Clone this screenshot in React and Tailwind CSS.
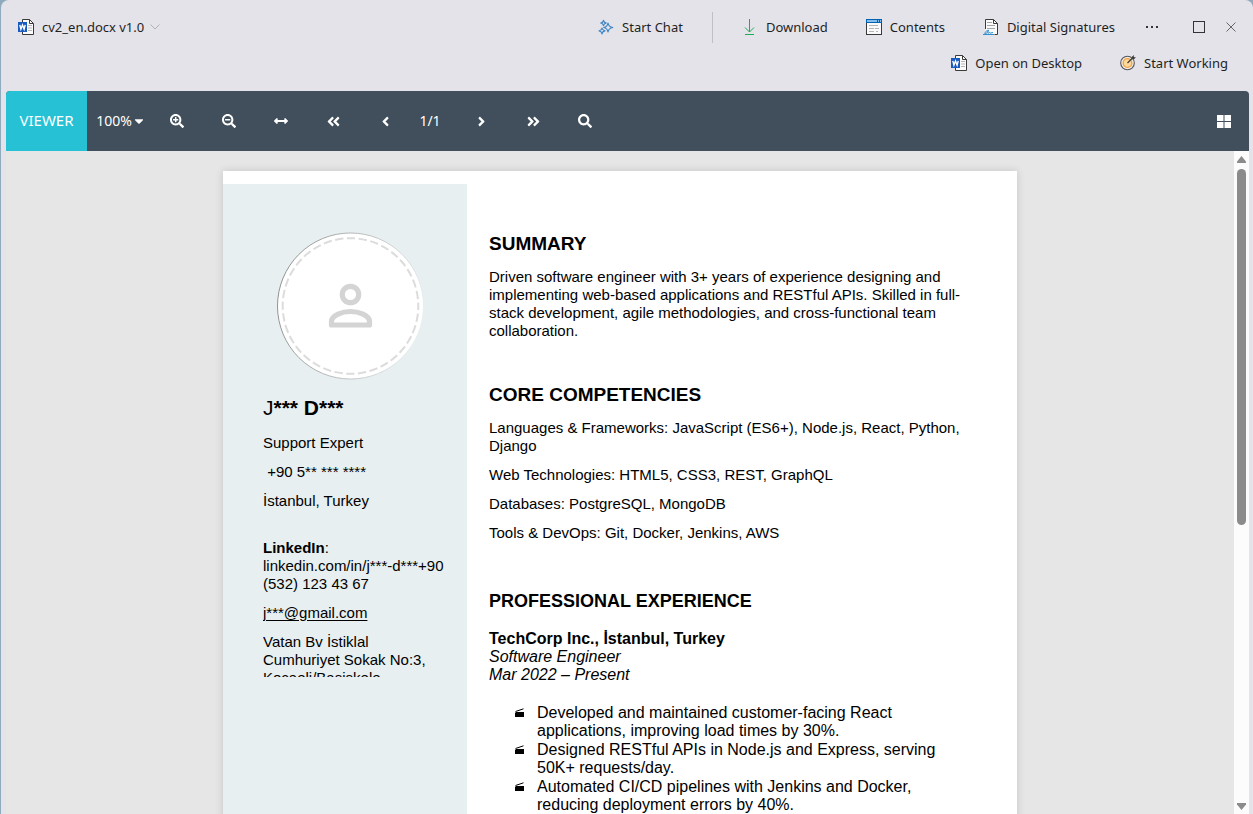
import React from "react";
import {
  FaSearchPlus,
  FaSearchMinus,
  FaArrowsAltH,
  FaAngleDoubleLeft,
  FaAngleLeft,
  FaAngleRight,
  FaAngleDoubleRight,
  FaSearch,
  FaCaretDown,
} from "react-icons/fa";

function WordIcon() {
  return (
    <svg width="16" height="16" viewBox="0 0 16 16" aria-hidden="true">
      <path d="M4.500 .5h7l4 4v11h-11z" fill="#fafafa" stroke="#3a3a38" />
      <path d="M11.500 .5v4h4" fill="none" stroke="#3a3a38" />
      <path d="M10 6.500h4M10 9h4M10 11.500h4" stroke="#b5b5b8" />
      <rect x="0" y="3" width="9" height="10" fill="#185abd" />
      <path d="M1.800 5.800l1.100 4.400L4.500 6l1.600 4.200L7.200 5.800" fill="none" stroke="#fff" strokeWidth="1.400" />
    </svg>
  );
}

function SparkleIcon() {
  return (
    <svg width="16" height="16" viewBox="0 0 16 16" fill="none" stroke="#3f87c5" strokeWidth="1.200" strokeLinejoin="round" aria-hidden="true">
      <path d="M10 4C10.500 6.700 12 8.100 14.800 8.500C12 9 10.500 10.200 10 13C9.500 10.200 8.200 9 5.800 8.500C8.200 8.100 9.500 6.700 10 4z" />
      <path d="M5.500 1.300C5.800 3 6.500 3.700 8.300 4C6.500 4.300 5.800 5 5.500 6.700C5.200 5 4.500 4.300 2.700 4C4.500 3.700 5.200 3 5.500 1.300z" />
      <path d="M4 9C4.300 10.700 5.200 11.500 7 11.800C5.200 12.100 4.300 13 4 14.800C3.700 13 2.800 12.100 1.100 11.800C2.800 11.500 3.700 10.700 4 9z" />
    </svg>
  );
}

function DownloadIcon() {
  return (
    <svg width="16" height="16" viewBox="0 0 16 16" fill="none" stroke="#1dab57" aria-hidden="true">
      <path d="M7.500 0v13M3 8.500l4.500 4.500L12 8.500M3 15.500h9" />
    </svg>
  );
}

function ContentsIcon() {
  return (
    <svg width="16" height="16" viewBox="0 0 16 16" aria-hidden="true">
      <rect x=".5" y=".5" width="15" height="15" fill="#fafafa" stroke="#3a3a38" />
      <rect x="0" y="0" width="16" height="4" fill="#0063b1" />
      <rect x="1" y="1" width="10" height="2" fill="#83beec" />
      <path d="M12.500 1v2M14.500 1v2" stroke="#83beec" />
      <path d="M3 6.500h9M3 9.500h5M9 9.500h4M3 12.500h5M10 12.500h2" stroke="#b5b5b8" />
    </svg>
  );
}

function SignatureIcon() {
  return (
    <svg width="16" height="16" viewBox="0 0 16 16" fill="none" aria-hidden="true">
      <path d="M2.500 11V.5h8l4 4v11h-3L2.500 12z" fill="#fafafa" />
      <path d="M2.500 10V.5h8l4 4v11h-3" stroke="#3a3a38" />
      <path d="M10.500 .5v4h4" stroke="#3a3a38" />
      <path d="M4 3.500h5M4 6.500h8M4 9.500h8" stroke="#a5a5a8" />
      <path d="M6 11.500C3.500 10.500 1.500 14 2 15C3.500 15.500 5 11.500 5.500 11.500C4.500 14 5 15 6.500 13.500L7.500 14L10 13.500M0 15.500h11" stroke="#2f8fd0" />
    </svg>
  );
}

function TargetIcon() {
  return (
    <svg width="16" height="16" viewBox="0 0 16 16" fill="none" aria-hidden="true">
      <circle cx="7.500" cy="8" r="6.800" stroke="#55555a" strokeWidth="1.100" fill="#f0ebe4" />
      <circle cx="7.500" cy="8" r="4.300" fill="#ffd99a" stroke="#f0a040" strokeWidth="1.300" />
      <path d="M7.500 8L13 2.500" stroke="#3a3a38" strokeWidth="1.200" />
      <path d="M12 4V1.800L13.800 0v2.200H16L14.200 4z" fill="#3a3a38" />
    </svg>
  );
}

function Action({ icon, children }) {
  return (
    <button type="button" className="flex h-9 items-center gap-2 whitespace-nowrap">
      {icon}
      <span>{children}</span>
    </button>
  );
}

function Header() {
  return (
    <header className="pt-[9px] pb-[10px] font-['Noto_Sans','Open_Sans',sans-serif] text-[13px] leading-5 text-[#1f1f1f]">
      <div className="flex h-9 items-center justify-between pr-[17px] pl-[17px]">
        <button type="button" className="flex items-center gap-2 whitespace-nowrap">
          <WordIcon />
          <span>cv2_en.docx v1.0</span>
          <svg width="10" height="6" viewBox="0 0 10 6" fill="none" stroke="#b0b0b5" className="-ml-0.5" aria-hidden="true">
            <path d="M.5 .5L5 5L9.500 .5" />
          </svg>
        </button>
        <div className="flex items-center">
          <Action icon={<SparkleIcon />}>Start Chat</Action>
          <div className="mx-[29px] h-[31px] w-px bg-[#bfbfc4]" />
          <div className="flex items-center gap-[38px]">
            <Action icon={<DownloadIcon />}>Download</Action>
            <Action icon={<ContentsIcon />}>Contents</Action>
            <Action icon={<SignatureIcon />}>Digital Signatures</Action>
          </div>
          <button type="button" aria-label="More" className="ml-[31px]">
            <svg width="14" height="4" viewBox="0 0 14 4" fill="#333" aria-hidden="true">
              <rect x="0" y="1" width="2" height="2" />
              <rect x="5" y="1" width="2" height="2" />
              <rect x="10" y="1" width="2" height="2" />
            </svg>
          </button>
          <button type="button" aria-label="Maximize" className="ml-[33px]">
            <svg width="12" height="12" viewBox="0 0 12 12" fill="none" stroke="#333" aria-hidden="true">
              <rect x=".5" y=".5" width="11" height="11" />
            </svg>
          </button>
          <button type="button" aria-label="Close" className="ml-[21px]">
            <svg width="10" height="10" viewBox="0 0 10 10" fill="none" stroke="#666" aria-hidden="true">
              <path d="M.5 .5l9 9M9.500 .5l-9 9" />
            </svg>
          </button>
        </div>
      </div>
      <div className="flex h-9 items-center justify-end gap-[38px] pr-[25px]">
        <Action icon={<WordIcon />}>Open on Desktop</Action>
        <Action icon={<TargetIcon />}>Start Working</Action>
      </div>
    </header>
  );
}

function ToolButton({ label, children }) {
  return (
    <button type="button" aria-label={label} className="flex h-full w-[52px] items-center justify-center">
      {children}
    </button>
  );
}

function Toolbar() {
  return (
    <div className="flex h-[60px] shrink-0 items-center overflow-hidden rounded-t-[4px] bg-[#404f5b] font-['Noto_Sans','Open_Sans',sans-serif] text-sm text-white">
      <button type="button" className="flex h-full w-[81px] items-center justify-center bg-[#26c1d5] text-[15px]">
        VIEWER
      </button>
      <button type="button" className="flex h-full w-16 items-center justify-center pl-1">
        100%
        <FaCaretDown size={14} />
      </button>
      <ToolButton label="Zoom in"><FaSearchPlus size={14} /></ToolButton>
      <ToolButton label="Zoom out"><FaSearchMinus size={14} /></ToolButton>
      <ToolButton label="Fit width"><FaArrowsAltH size={14} /></ToolButton>
      <ToolButton label="First page"><FaAngleDoubleLeft size={15} /></ToolButton>
      <ToolButton label="Previous page"><FaAngleLeft size={15} /></ToolButton>
      <span className="w-11 pr-1.5 text-center">1/1</span>
      <ToolButton label="Next page"><FaAngleRight size={15} /></ToolButton>
      <ToolButton label="Last page"><FaAngleDoubleRight size={15} /></ToolButton>
      <ToolButton label="Search"><FaSearch size={14} /></ToolButton>
      <button type="button" aria-label="Thumbnails" className="mr-[18px] ml-auto">
        <svg width="14" height="13" viewBox="0 0 14 13" fill="#fff" aria-hidden="true">
          <path d="M0 0h6.500v6H0zM7.500 0H14v6H7.500zM0 7h6.500v6H0zM7.500 7H14v6H7.500z" />
        </svg>
      </button>
    </div>
  );
}

function Avatar() {
  return (
    <svg width="148" height="148" viewBox="0 0 148 148" fill="none" className="ml-[14px]" role="img" aria-label="Profile">
      <defs>
        <linearGradient id="rim" x1="0" y1=".4" x2="1" y2=".6">
          <stop offset="0" stopColor="#777" />
          <stop offset=".6" stopColor="#bbb" />
          <stop offset="1" stopColor="#e7eff0" />
        </linearGradient>
      </defs>
      <circle cx="73.500" cy="74" r="73" fill="#fff" stroke="url(#rim)" strokeWidth=".8" />
      <circle cx="73.500" cy="74" r="67.800" stroke="#dcdcdc" strokeWidth="2" strokeDasharray="8.300 3.533" strokeDashoffset="4.150" />
      <circle cx="73.500" cy="62.500" r="8.200" stroke="#d4d4d4" strokeWidth="5.200" />
      <path d="M54.500 93v-3.500C54.500 83 65.500 79.500 73.500 79.500S92.500 83 92.500 89.500V93z" stroke="#d4d4d4" strokeWidth="5.200" strokeLinejoin="round" />
    </svg>
  );
}

function Sidebar() {
  return (
    <aside className="mt-[13px] w-[244px] shrink-0 bg-[#e7eff0] pt-12 pl-10">
      <Avatar />
      <h1 className="mt-4 text-[21px] leading-6">
        J<b>*** D***</b>
      </h1>
      <div className="mt-[14px] flex h-[243px] flex-col gap-[11px] overflow-hidden">
        <p>Support Expert</p>
        <p>&nbsp;+90 5** *** ****</p>
        <p>İstanbul, Turkey</p>
        <p className="mt-[18px]">
          <b>LinkedIn</b>:<br />
          linkedin.com/in/j***-d***+90
          <br />
          (532) 123 43 67
        </p>
        <p>
          <a href="#mail" className="underline underline-offset-2">j***@gmail.com</a>
        </p>
        <p>
          Vatan Bv İstiklal
          <br />
          Cumhuriyet Sokak No:3,
          <br />
          Kocaeli/Başiskele
        </p>
      </div>
    </aside>
  );
}

const duties = [
  "Developed and maintained customer-facing React applications, improving load times by 30%.",
  "Designed RESTful APIs in Node.js and Express, serving 50K+ requests/day.",
  "Automated CI/CD pipelines with Jenkins and Docker, reducing deployment errors by 40%.",
];

function Bullet() {
  return (
    <svg width="10" height="10" viewBox="0 0 10 10" className="mt-1 shrink-0" aria-hidden="true">
      <path d="M0 5l1-1h8v5H0z" fill="#000" />
      <path d="M.5 3.500L8.500 .8" stroke="#000" />
    </svg>
  );
}

function Main() {
  return (
    <div className="flex-1 pt-[61px] pr-14 pl-[22px]">
      <h2 className="text-[19px] leading-6 font-bold">SUMMARY</h2>
      <p className="mt-3">
        Driven software engineer with 3+ years of experience designing and implementing web-based
        applications and RESTful APIs. Skilled in full-stack development, agile methodologies, and
        cross-functional team collaboration.
      </p>
      <h2 className="mt-[43px] text-[19px] leading-6 font-bold">CORE COMPETENCIES</h2>
      <div className="mt-3 flex flex-col gap-[11px]">
        <p>Languages &amp; Frameworks: JavaScript (ES6+), Node.js, React, Python, Django</p>
        <p>Web Technologies: HTML5, CSS3, REST, GraphQL</p>
        <p>Databases: PostgreSQL, MongoDB</p>
        <p>Tools &amp; DevOps: Git, Docker, Jenkins, AWS</p>
      </div>
      <h2 className="mt-[47px] text-lg leading-6 font-bold">PROFESSIONAL EXPERIENCE</h2>
      <div className="mt-[17px] text-base leading-[18px]">
        <h3 className="font-bold">TechCorp Inc., İstanbul, Turkey</h3>
        <p className="italic">Software Engineer</p>
        <p className="italic">Mar 2022 – Present</p>
        <ul className="mt-5 flex flex-col gap-px pl-[26px]">
          {duties.map((d) => (
            <li key={d} className="flex gap-3">
              <Bullet />
              <span>{d}</span>
            </li>
          ))}
        </ul>
      </div>
    </div>
  );
}

function Scrollbar() {
  return (
    <div className="flex w-[15px] shrink-0 flex-col items-center bg-[#fcfcfc] pt-[5px] pb-1" aria-hidden="true">
      <svg width="9" height="7" viewBox="0 0 9 7" fill="#8b8b8b"><path d="M4.500 0L9 5.500V7H0V5.500z" /></svg>
      <div className="mt-[6px] h-[356px] w-[9px] rounded-full bg-[#8b8b8b]" />
      <svg width="9" height="7" viewBox="0 0 9 7" fill="#8b8b8b" className="mt-auto"><path d="M4.500 7L9 1.500V0H0v1.500z" /></svg>
    </div>
  );
}

export default function App() {
  return (
    <div className="h-screen overflow-hidden bg-[#8fa9bd]">
      <div className="ml-px flex h-full flex-col overflow-hidden rounded-t-[8px] bg-[#e4e3e9]">
        <Header />
        <div className="mr-1 ml-[5px] flex min-h-0 flex-1 flex-col">
          <Toolbar />
          <div className="flex min-h-0 flex-1">
            <div className="flex-1 overflow-hidden bg-[#e6e6e6] pt-5">
              <article className="mx-auto flex min-h-[1123px] w-full max-w-[794px] bg-white font-['Liberation_Sans',Arial,sans-serif] text-[15px] leading-[18px] text-black shadow-[0_0_8px_rgba(0,0,0,0.15)]">
                <Sidebar />
                <Main />
              </article>
            </div>
            <Scrollbar />
          </div>
        </div>
      </div>
    </div>
  );
}
